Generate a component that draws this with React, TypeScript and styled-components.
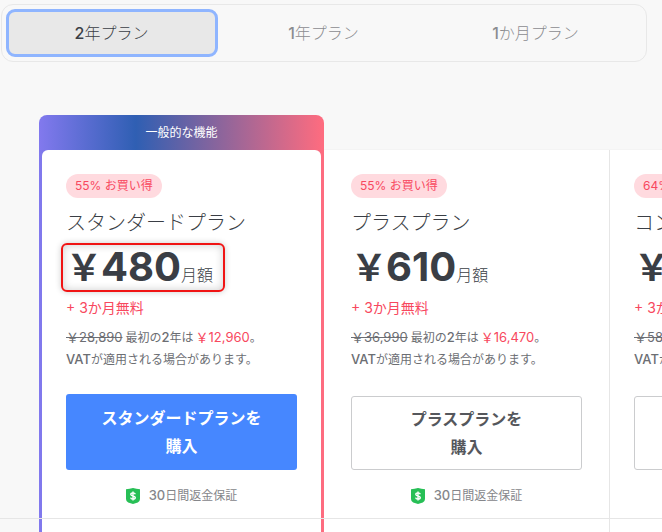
import React from "react";
import styled, { createGlobalStyle, css } from "styled-components";

const GlobalStyle = createGlobalStyle`
  * { box-sizing: border-box; }
  body {
    margin: 0;
    background: #f8f8f8;
    color: #3a3e45;
    font-family: Inter, "Noto Sans CJK JP", sans-serif;
    font-size: 12px;
  }
  h2, p { margin: 0; }
  button { font-family: inherit; margin: 0; cursor: pointer; }
`;

const Page = styled.main`
  display: flex;
  flex-direction: column;
  min-height: 100vh;
  padding-top: 4px;
  overflow: hidden;
`;

const TabList = styled.div`
  display: grid;
  grid-template-columns: repeat(3, 1fr);
  margin: 0 15px 53px 1px;
  padding: 4px;
  border: 1px solid #e8e8e8;
  border-radius: 12px;
`;

const Tab = styled.button<{ $active: boolean }>`
  height: 48px;
  padding: 0 1px 2px 0;
  border: 3px solid ${(p) => (p.$active ? "#8fb5ff" : "transparent")};
  border-radius: 9px;
  background: ${(p) => (p.$active ? "#e8e8e8" : "transparent")};
  color: ${(p) => (p.$active ? "#3a3e45" : "#8b8c90")};
  font-size: 16px;
  font-weight: 300;
`;

const TabNumber = styled.span`
  font-weight: 500;
`;

const columns = css`
  display: grid;
  grid-template-columns: repeat(3, minmax(285px, 1fr));
  padding-left: 39px;
`;

const Plans = styled.section`
  ${columns}
  align-items: end;
  border-bottom: 1px solid #e6e6e6;
`;

const Features = styled.section`
  ${columns}
  flex: 1;
`;

const Column = styled.article<{ $featured?: boolean; $divided?: boolean }>`
  padding: 0 3px;
  background: ${(p) =>
    p.$featured ? "linear-gradient(90deg, #8279ee 0%, #2f5fb3 34%, #ff6c7f 100%)" : "#fff"};
  ${(p) =>
    p.$divided &&
    css`
      padding: 0;
      border-left: 1px solid #e6e6e6;
    `}
`;

const PlanColumn = styled(Column)`
  border-radius: ${(p) => (p.$featured ? "8px 8px 0 0" : "0")};
  box-shadow: ${(p) => (p.$featured ? "none" : "0 -1px 0 #f4f4f4")};
`;

const Ribbon = styled.div`
  height: 35px;
  color: #fff;
  line-height: 35px;
  text-align: center;
`;

const Body = styled.div<{ $rounded?: boolean }>`
  display: flex;
  flex-direction: column;
  align-items: flex-start;
  min-height: 368px;
  padding: 24px 24px 10px;
  border-radius: ${(p) => (p.$rounded ? "6px 6px 0 0" : "0")};
  background: #fff;
`;

const FeatureCell = styled.div`
  height: 100%;
  background: #fff;
`;

const Badge = styled.span`
  padding: 0 9px;
  border-radius: 12px;
  background: #ffdadf;
  color: #f8485e;
  line-height: 24px;
  white-space: nowrap;
`;

const Title = styled.h2`
  margin-top: 8px;
  font-size: 20px;
  font-weight: 300;
  line-height: 34px;
  white-space: nowrap;
`;

const Price = styled.p`
  position: relative;
  display: flex;
  align-items: baseline;
  height: 54px;
  line-height: 54px;
  white-space: nowrap;
`;

const Yen = styled.span`
  width: 35px;
  font-size: 36px;
  font-weight: 700;
`;

const Amount = styled.strong`
  font-size: 40px;
  font-weight: 700;
`;

const Period = styled.span`
  font-size: 16px;
  font-weight: 300;
`;

const Highlight = styled.span`
  position: absolute;
  inset: 3px -12px 2px -5px;
  border: 2px solid #f01414;
  border-radius: 6px;
  box-shadow: 0 0 6px rgba(0, 0, 0, 0.2), inset 0 0 8px rgba(0, 0, 0, 0.2);
`;

const Bonus = styled.p`
  margin-top: 2px;
  color: #f8485e;
  font-size: 14px;
  line-height: 24px;
  white-space: nowrap;
`;

const Note = styled.p`
  margin-top: 7px;
  color: #6c6e73;
  line-height: 22px;
  white-space: nowrap;
`;

const Latin = styled.span`
  font-size: 13px;
  font-weight: 500;
  line-height: 1;
`;

const OldPrice = styled.s`
  margin-right: 3px;
  font-size: 13px;
  line-height: 1;
`;

const NewPrice = styled.span`
  margin-left: 2px;
  color: #f8485e;
  font-size: 13px;
  line-height: 1;
`;

const BuyButton = styled.button<{ $primary?: boolean }>`
  align-self: stretch;
  margin-top: auto;
  padding: 0;
  height: ${(p) => (p.$primary ? "76px" : "74px")};
  border: ${(p) => (p.$primary ? "0" : "1px solid #cbccce")};
  border-radius: 3px;
  background: ${(p) => (p.$primary ? "#4687ff" : "#fff")};
  color: ${(p) => (p.$primary ? "#fff" : "#55575c")};
  font-size: 16px;
  font-weight: 700;
  line-height: 28px;
`;

const Guarantee = styled.p`
  display: flex;
  align-self: center;
  align-items: center;
  gap: 9px;
  margin-top: 14px;
  color: #85868a;
  line-height: 24px;
`;

const Shield = () => (
  <svg width="14" height="16" viewBox="0 0 14 16" aria-hidden="true">
    <path
      d="M0 1.200Q3.600 1.100 7 0q3.400 1.100 7 1.200V11q0 2.500-2.200 3.500L7 16l-4.800-1.500Q0 13.500 0 11Z"
      fill="#27bf56"
    />
    <path
      d="M9.300 6.200C9 5.200 8.200 4.900 7 4.900c-1.300 0-2.200.5-2.200 1.500 0 2.100 4.500 1 4.500 3.200 0 1-.9 1.600-2.300 1.600-1.300 0-2.200-.5-2.400-1.500M7 3.500v9"
      fill="none"
      stroke="#fff"
      strokeWidth="1.400"
    />
  </svg>
);

const tabs = [
  { count: "2", label: "年プラン" },
  { count: "1", label: "年プラン" },
  { count: "1", label: "か月プラン" },
];

const plans = [
  { name: "スタンダードプラン", saving: "55%", price: "480", before: "28,890", now: "12,960", featured: true },
  { name: "プラスプラン", saving: "55%", price: "610", before: "36,990", now: "16,470" },
  { name: "コンプリートプラン", saving: "64%", price: "780", before: "58,590", now: "21,060", divided: true },
];

export default function App() {
  const [active, setActive] = React.useState(0);
  return (
    <>
      <GlobalStyle />
      <Page lang="ja">
        <TabList role="tablist">
          {tabs.map((tab, i) => (
            <Tab
              key={i}
              type="button"
              role="tab"
              aria-selected={i === active}
              $active={i === active}
              onClick={() => setActive(i)}
            >
              <TabNumber>{tab.count}</TabNumber>
              {tab.label}
            </Tab>
          ))}
        </TabList>
        <Plans>
          {plans.map((plan) => (
            <PlanColumn key={plan.name} $featured={plan.featured} $divided={plan.divided}>
              {plan.featured && <Ribbon>一般的な機能</Ribbon>}
              <Body $rounded={plan.featured}>
                <Badge>{plan.saving} お買い得</Badge>
                <Title>{plan.name}</Title>
                <Price>
                  <Yen>￥</Yen>
                  <Amount>{plan.price}</Amount>
                  <Period>月額</Period>
                  {plan.featured && <Highlight />}
                </Price>
                <Bonus>+ 3か月無料</Bonus>
                <Note>
                  <OldPrice>￥{plan.before}</OldPrice>
                  最初の<Latin>2</Latin>年は
                  <NewPrice>￥{plan.now}</NewPrice>。
                  <br />
                  <Latin>VAT</Latin>が適用される場合があります。
                </Note>
                <BuyButton type="button" $primary={plan.featured}>
                  {plan.name}を<br />
                  購入
                </BuyButton>
                <Guarantee>
                  <Shield />
                  <span>
                    <Latin>30</Latin>日間返金保証
                  </span>
                </Guarantee>
              </Body>
            </PlanColumn>
          ))}
        </Plans>
        <Features>
          {plans.map((plan) => (
            <Column as="div" key={plan.name} $featured={plan.featured} $divided={plan.divided}>
              <FeatureCell />
            </Column>
          ))}
        </Features>
      </Page>
    </>
  );
}
